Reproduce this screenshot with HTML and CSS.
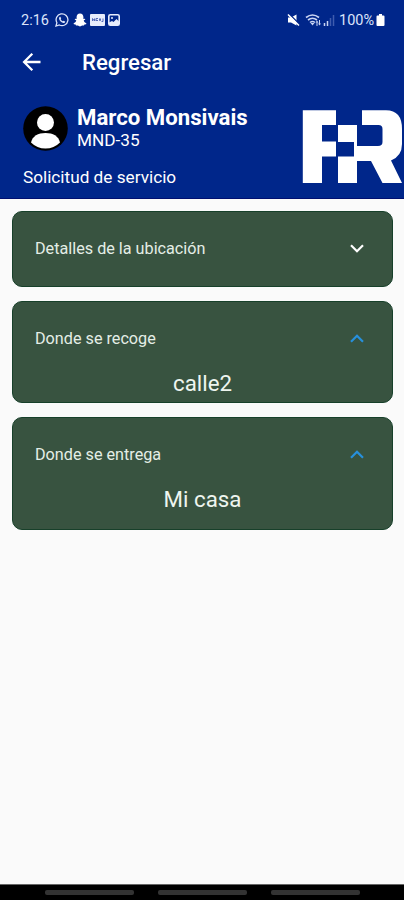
FILE: index.html
```html
<!DOCTYPE html>
<html lang="es">
<head>
    <meta charset="UTF-8">
    <meta name="viewport" content="width=device-width, initial-scale=1.0">
    <title>Solicitud de servicio</title>
    <link rel="stylesheet" href="styles.css">
</head>
<body>

<header class="header">
    <div class="status-bar">
        <span class="time">2:16</span>
        <svg class="whatsapp" width="14" height="14" viewBox="0 0 14 14">
            <path d="M1 13l.9-3.3A5.9 5.9 0 1 1 4.3 12z" fill="none" stroke="#dce4fa" stroke-width="1.3"/>
            <path d="M4.4 4.1l1-.4.8 1.8-.5.8c.5.9 1.1 1.5 2 2l.8-.6 1.7.8c-.1 1.2-1.1 1.7-2 1.5C6 9.400 4.300 7.500 4 5.500z" fill="#dce4fa"/>
        </svg>
        <svg class="snapchat" width="14" height="14" viewBox="0 0 14 14">
            <path d="M7 .5c2.200 0 3.400 1.600 3.400 3.500v2l1.500-.3.400.8-1.600 1c.5 1.400 1.300 2.200 2.700 2.700l-.3 1-1.700.4-.4 1-1.800-.1L7 13.500l-2.200-1-1.800.1-.4-1-1.700-.4-.3-1c1.400-.5 2.200-1.300 2.700-2.700l-1.600-1 .4-.8 1.500.3V4C3.600 2.100 4.800.5 7 .5z" fill="#fff"/>
        </svg>
        <svg class="news" width="15" height="14" viewBox="0 0 15 14">
            <rect x="0" y="1" width="15" height="12" rx="1" fill="#e6ecfc"/>
            <path d="M2.500 8V5.500l2 2.500V5.500M6 8V5.500h2M6 7.500h2M9.500 5.500v2h1v-2M11.500 8.500h1.500v-3" fill="none" stroke="#5369b8" stroke-width="1"/>
        </svg>
        <svg class="gallery" width="12" height="14" viewBox="0 0 12 14">
            <rect x=".8" y="1.800" width="10.400" height="10.400" rx="1.500" fill="none" stroke="#e6ecfc" stroke-width="1.600"/>
            <path d="M1 12V9.500L4 8l1.500 1L8.500 6 11 8.500V12z" fill="#e6ecfc"/>
            <circle cx="4" cy="5" r="1" fill="#e6ecfc"/>
        </svg>
        <svg class="mute" width="13" height="14" viewBox="0 0 13 14">
            <path d="M1 4.500h3L9.500 1.500v11L4 9.500H1z" fill="#fff"/>
            <path d="M2 .8l11 11" stroke="#00268a" stroke-width="1.500"/>
            <path d="M1 1.500l11 11" stroke="#fff" stroke-width="1.500"/>
        </svg>
        <svg class="wifi" width="17" height="14" viewBox="0 0 17 14">
            <path d="M1 4.500q6.500-5 13 0M3 7q4.500-3.500 9 0M5 9.500q2.500-2 5 0" fill="none" stroke="#c9d4f2" stroke-width="1.600"/>
            <path d="M5.500 10h4l-2 2.500zM10.500 9.500l1.500-2 1.500 2zM13 10.500h3l-1.500 2z" fill="#c9d4f2"/>
            <path d="M12 9v4M14.500 7v4" stroke="#c9d4f2" stroke-width="1"/>
        </svg>
        <svg class="signal" width="12" height="14" viewBox="0 0 12 14">
            <path d="M1.500 10v3M4.500 8v5" stroke="#c9d4f2" stroke-width="1.500"/>
            <path d="M7.500 5v8M10.500 2v11" stroke="#3f5cae" stroke-width="1.500"/>
        </svg>
        <span class="percent">100%</span>
        <svg class="battery" width="9" height="14" viewBox="0 0 9 14">
            <path d="M3 1h3v1.500h1.500q1 0 1 1V12q0 1-1 1h-6q-1 0-1-1V3.500q0-1 1-1H3z" fill="#fff"/>
        </svg>
    </div>

    <div class="app-bar">
        <svg width="20" height="20" viewBox="0 0 20 20">
            <path d="M18.500 10H2.500M10.300 1.800L2.100 10l8.200 8.200" fill="none" stroke="#fff" stroke-width="2.300"/>
        </svg>
        <h1>Regresar</h1>
    </div>

    <div class="profile">
        <div class="user">
            <svg class="avatar" width="45" height="45" viewBox="0 0 45 45">
                <circle cx="22.500" cy="22.500" r="22.300" fill="#000"/>
                <circle cx="22.500" cy="16.500" r="8.500" fill="#fff"/>
                <path d="M8 36.500C9.500 30 15 27 22.500 27S35.500 30 37 36.500Q31 42.500 22.500 42.500T8 36.500z" fill="#fff"/>
            </svg>
            <div class="user-data">
                <h2>Marco Monsivais</h2>
                <p>MND-35</p>
            </div>
        </div>
        <p class="subtitle">Solicitud de servicio</p>
    </div>

    <svg class="logo" width="102" height="74" viewBox="0 0 102 74">
        <g fill="#fff">
            <path d="M.8.200H34V15H20V31.500H34V46.500H20V73H.8z"/>
            <path d="M36 15H55V36H76Q80.500 36 80.500 32V19Q80.500 15 76.500 15H60V.200H84Q100 .200 100 19V34Q100 46 89 50.500L100 73H80.500L69 51H55V73H36V46.500H52V32H36z"/>
        </g>
    </svg>
</header>

<main class="content">
    <section class="card card-closed">
        <div class="card-header" onclick="toggleCard(this)">
            <span>Detalles de la ubicación</span>
            <svg width="14" height="9" viewBox="0 0 14 9"><path d="M1 1.200l6 6 6-6"/></svg>
        </div>
    </section>

    <section class="card card-open">
        <div class="card-header" onclick="toggleCard(this)">
            <span>Donde se recoge</span>
            <svg width="14" height="9" viewBox="0 0 14 9"><path d="M1 1.200l6 6 6-6"/></svg>
        </div>
        <p class="card-body">calle2</p>
    </section>

    <section class="card card-open card-last">
        <div class="card-header" onclick="toggleCard(this)">
            <span>Donde se entrega</span>
            <svg width="14" height="9" viewBox="0 0 14 9"><path d="M1 1.200l6 6 6-6"/></svg>
        </div>
        <p class="card-body">Mi casa</p>
    </section>
</main>

<footer class="nav-bar">
    <span></span>
    <span></span>
    <span></span>
</footer>

<script>
    function toggleCard(header) {
        const card = header.parentElement;
        if (card.querySelector('.card-body')) {
            card.classList.toggle('card-open');
            card.classList.toggle('card-closed');
        }
    }
</script>

</body>
</html>
```
FILE: styles.css
```css
* {
    box-sizing: border-box;
}

body {
    display: flex;
    flex-direction: column;
    height: 900px;
    margin: 0;
    background-color: #fafafa;
    color: #fff;
    font-family: Roboto, sans-serif;
}

h1, h2, p {
    margin: 0;
}

svg {
    flex-shrink: 0;
}

/* Header */
.header {
    position: relative;
    height: 199px;
    background-color: #00268a;
    border-bottom: 1px solid #000f70;
}

.status-bar {
    display: flex;
    align-items: center;
    height: 40px;
    padding: 0 19px 0 21px;
    color: #dce4fa;
    font-size: 14.5px;
}

.time {
    width: 29px;
    margin-right: 5px;
}

.snapchat {
    margin-left: 4px;
}

.news {
    margin-left: 3px;
}

.gallery {
    margin-left: 3px;
}

.mute {
    margin-left: auto;
}

.wifi {
    margin-left: 5px;
}

.signal {
    margin-left: 1px;
}

.percent {
    width: 36px;
    margin-left: 4px;
}

.battery {
    margin-left: 1px;
}

.app-bar {
    display: flex;
    align-items: center;
    gap: 40px;
    height: 44px;
    padding-left: 22px;
}

.app-bar h1 {
    font-size: 22.2px;
    font-weight: 500;
}

.profile {
    padding: 22px 23px 0;
}

.user {
    display: flex;
    gap: 9px;
    height: 45px;
}

.user-data h2 {
    font-size: 22.2px;
    font-weight: 700;
    line-height: 22px;
}

.user-data p {
    font-size: 17.2px;
    line-height: 25px;
}

.subtitle {
    margin-top: 16px;
    font-size: 17.2px;
    line-height: 20px;
}

.logo {
    position: absolute;
    right: 0;
    top: 110px;
}

/* Cards */
.content {
    display: flex;
    flex: 1;
    flex-direction: column;
    gap: 14px;
    padding: 12px 11px 0 12px;
}

.card {
    background-color: #385340;
    border: 1px solid #17402a;
    border-radius: 10px;
}

.card-closed {
    height: 76px;
}

.card-open {
    height: 102px;
}

.card-last.card-open {
    height: 113px;
}

.card-header {
    display: flex;
    align-items: center;
    justify-content: space-between;
    height: 73px;
    padding: 0 28.5px 0 22px;
    color: #e4eee6;
    font-size: 16.2px;
    cursor: pointer;
}

.card-header path {
    fill: none;
    stroke: #fff;
    stroke-width: 2.2;
}

.card-open .card-header path {
    stroke: #2790dc;
}

.card-open .card-header svg {
    transform: rotate(180deg);
}

.card-body {
    margin-top: -5px;
    color: #eef5ef;
    font-size: 22.3px;
    line-height: 26px;
    text-align: center;
}

.card-closed .card-body {
    display: none;
}

/* Bottom navigation */
.nav-bar {
    display: flex;
    justify-content: center;
    gap: 24px;
    height: 16px;
    padding-top: 5px;
    background-color: #000;
    border-top: 1px solid #666;
}

.nav-bar span {
    width: 89px;
    height: 5px;
    background-color: #333;
    border-radius: 2px;
}
```
